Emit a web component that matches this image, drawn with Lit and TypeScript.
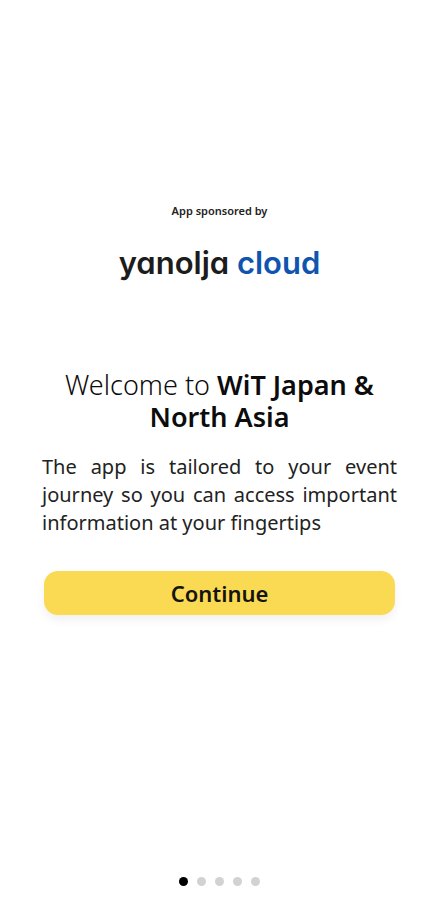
import { LitElement, html, css } from "lit";
import { customElement, property, state } from "lit/decorators.js";
import { classMap } from "lit/directives/class-map.js";

@customElement("page-dots")
export class PageDots extends LitElement {
  @property({ type: Number }) count = 5;
  @property({ type: Number }) current = 0;

  static styles = css`
    :host {
      display: block;
    }
    .dots {
      display: flex;
      justify-content: center;
      gap: 9px;
      margin: 0;
      padding: 0;
      list-style: none;
    }
    .dot {
      width: 9px;
      height: 9px;
      border-radius: 50%;
      background: #d2d2d2;
    }
    .active {
      background: #000;
    }
  `;

  render() {
    return html`
      <ol class="dots">
        ${Array.from(
          { length: this.count },
          (_, i) => html`<li class=${classMap({ dot: true, active: i === this.current })}></li>`
        )}
      </ol>
    `;
  }
}

@customElement("app-root")
export class AppRoot extends LitElement {
  @state() private step = 0;

  static styles = css`
    :host {
      display: block;
      background: #fff;
      color: #0c0c0c;
      font-family: "Noto Sans", "Open Sans", sans-serif;
    }
    .screen {
      box-sizing: border-box;
      min-height: 100vh;
      display: flex;
      flex-direction: column;
      padding: 200px 41px 14px 42px;
    }
    .sponsor {
      display: flex;
      flex-direction: column;
      align-items: center;
      gap: 21px;
    }
    .caption {
      margin: 0;
      font-size: 11px;
      line-height: 22px;
      font-weight: 600;
      color: #222;
    }
    .logo {
      margin: 0;
      font-family: Inter, sans-serif;
      font-feature-settings: "cv11";
      font-size: 31px;
      line-height: 40px;
      font-weight: 600;
      white-space: nowrap;
      color: #1c1c1c;
    }
    .cloud {
      color: #0f54ae;
    }
    .title {
      margin: 86px 0 20px;
      text-align: center;
      font-size: 27px;
      line-height: 32px;
      font-weight: 300;
    }
    .event {
      font-weight: 600;
    }
    .intro {
      margin: 0;
      font-size: 20px;
      line-height: 28px;
      font-weight: 400;
      color: #222;
      text-align: justify;
    }
    .continue {
      margin: 34px 2px 0;
      height: 44px;
      border: 0;
      border-radius: 14px;
      background: #fada52;
      color: #141414;
      font: inherit;
      font-size: 22px;
      font-weight: 600;
      box-shadow: 0 5px 10px rgba(0, 0, 0, 0.06);
      cursor: pointer;
    }
    .pager {
      margin-top: auto;
    }
  `;

  private advance() {
    this.step = Math.min(this.step + 1, 4);
  }

  render() {
    return html`
      <main class="screen">
        <section class="sponsor">
          <p class="caption">App sponsored by</p>
          <p class="logo">yanolja <span class="cloud">cloud</span></p>
        </section>
        <h1 class="title">
          Welcome to <span class="event">WiT Japan &amp;</span> <span class="event">North Asia</span>
        </h1>
        <p class="intro">
          The app is tailored to your event journey so you can access important information at your fingertips
        </p>
        <button class="continue" type="button" @click=${this.advance}>Continue</button>
        <page-dots class="pager" .count=${5} .current=${this.step}></page-dots>
      </main>
    `;
  }
}
